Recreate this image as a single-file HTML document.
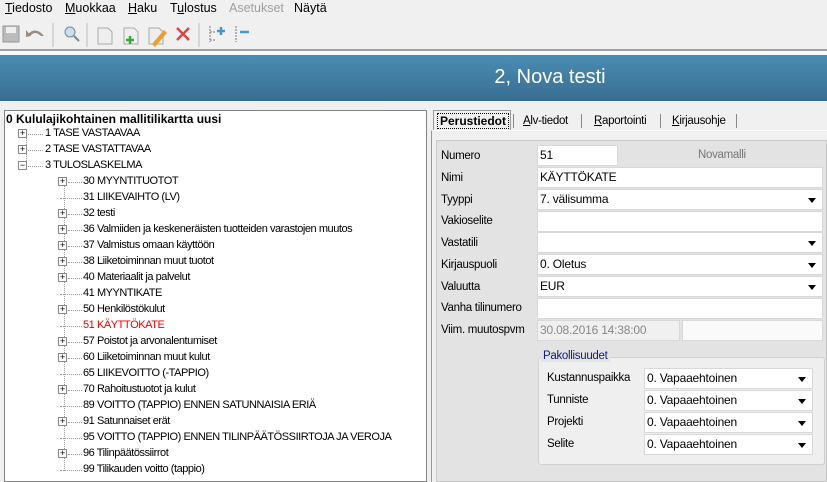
<!DOCTYPE html><html><head><style>
*{box-sizing:border-box;margin:0;padding:0}
body{width:827px;height:482px;overflow:hidden;background:#f0f0f0;font-family:"Liberation Sans",sans-serif;font-size:12px;color:#000;position:relative}
.a{position:absolute;white-space:nowrap}
.hdr{position:absolute;left:0;top:55px;width:827px;height:46px;background:linear-gradient(#4a8db3,#396d92);color:#fff;font-size:20px;text-align:center;line-height:44px;padding-left:273px}
.tree{position:absolute;left:4px;top:110px;width:423px;height:372px;background:#fff;border:1px solid #828282}
.t{position:absolute;white-space:nowrap;font-size:11px;letter-spacing:-0.45px}
.pb{position:absolute;width:9px;height:9px;border:1px solid #888;background:#fff;font-size:9px;line-height:7px;text-align:center}
.dv{position:absolute;border-top:1px dotted #999;height:0}
.vl{position:absolute;border-left:1px dotted #999;width:0}
.in{position:absolute;background:#fff;border:1px solid #d8d8d8;height:21px;font-size:12px;line-height:19px;padding-left:2px;letter-spacing:-0.2px}
.dd:after{content:"";position:absolute;right:6px;top:8px;border-left:4px solid transparent;border-right:4px solid transparent;border-top:5px solid #000}
.lb{position:absolute;font-size:11.5px;letter-spacing:-0.3px}
</style></head><body>
<div class="a" style="left:5px;top:1px;font-size:12.5px"><u>T</u>iedosto</div>
<div class="a" style="left:65px;top:1px;font-size:12.5px"><u>M</u>uokkaa</div>
<div class="a" style="left:128px;top:1px;font-size:12.5px"><u>H</u>aku</div>
<div class="a" style="left:170px;top:1px;font-size:12.5px">T<u>u</u>lostus</div>
<div class="a" style="left:229px;top:1px;font-size:12.5px;color:#a0a0a0">Asetukset</div>
<div class="a" style="left:294px;top:1px;font-size:12.5px">Näytä</div>
<svg class="a" style="left:0;top:20px" width="270" height="30">
<rect x="3" y="6" width="16" height="16" fill="#bbb" stroke="#999"/><rect x="6" y="7" width="10" height="6" fill="#eee"/>
<path d="M28 14 q8-8 16 2 l-3 0 q-6-6-11 0z" fill="#9a8a80"/><path d="M26 10 l5 6 l-5 1z" fill="#9a8a80"/>
<line x1="53" y1="3" x2="53" y2="27" stroke="#bbb"/>
<circle cx="70" cy="12" r="5" fill="#cde" stroke="#789"/><line x1="74" y1="16" x2="79" y2="21" stroke="#789" stroke-width="2"/>
<line x1="87" y1="3" x2="87" y2="27" stroke="#bbb"/>
<path d="M98 8h10l4 4v12h-14z" fill="#eee" stroke="#aaa"/>
<path d="M124 8h10l4 4v12h-14z" fill="#eee" stroke="#aaa"/><path d="M126 20h8M130 16v8" stroke="#3a3" stroke-width="2.5"/>
<path d="M149 8h10l4 4v12h-14z" fill="#eee" stroke="#aaa"/><path d="M152 24l12-14 3 3-12 14z" fill="#e8a030"/>
<path d="M177 8l12 12M189 8l-12 12" stroke="#d44" stroke-width="2.5"/>
<line x1="199" y1="3" x2="199" y2="27" stroke="#bbb"/>
<path d="M210 6v16M210 12h5M210 20h5" stroke="#777" stroke-dasharray="2 1"/><path d="M217 11h8M221 7v8" stroke="#49c" stroke-width="2.5"/>
<path d="M236 6v16" stroke="#777" stroke-dasharray="2 1"/><path d="M240 12h9" stroke="#49c" stroke-width="2.5"/>
</svg>
<div class="a" style="left:0;top:49px;width:827px;height:2px;background:#a0a0a0"></div>
<div class="a" style="left:0;top:51px;width:827px;height:4px;background:#f8f8f8"></div>
<div class="hdr">2, Nova testi</div>
<div class="tree">
<div class="t" style="left:1px;top:1px;font-weight:bold;font-size:12px;letter-spacing:0">0 Kululajikohtainen mallitilikartta uusi</div>
<div class="vl" style="left:21px;top:18px;height:40px"></div>
<div class="vl" style="left:59px;top:66px;height:294px"></div>
</div>
<div id="tr"></div>
<script>
var L1=[["1 TASE VASTAAVAA","+"],["2 TASE VASTATTAVAA","+"],["3 TULOSLASKELMA","−"]];
var L2=[["30 MYYNTITUOTOT",1],["31 LIIKEVAIHTO (LV)",0],["32 testi",1],["36 Valmiiden ja keskeneräisten tuotteiden varastojen muutos",1],["37 Valmistus omaan käyttöön",1],["38 Liiketoiminnan muut tuotot",1],["40 Materiaalit ja palvelut",1],["41 MYYNTIKATE",0],["50 Henkilöstökulut",1],["51 KÄYTTÖKATE",0,1],["57 Poistot ja arvonalentumiset",1],["60 Liiketoiminnan muut kulut",1],["65 LIIKEVOITTO (-TAPPIO)",0],["70 Rahoitustuotot ja kulut",1],["89 VOITTO (TAPPIO) ENNEN SATUNNAISIA ERIÄ",0],["91 Satunnaiset erät",1],["95 VOITTO (TAPPIO) ENNEN TILINPÄÄTÖSSIIRTOJA JA VEROJA",0],["96 Tilinpäätössiirrot",1],["99 Tilikauden voitto (tappio)",0]];
var h="";
L1.forEach(function(e,i){var y=134+i*16;h+='<div class="pb" style="left:18px;top:'+(y-5)+'px">'+e[1]+'</div><div class="dv" style="left:28px;top:'+y+'px;width:15px"></div><div class="t" style="left:45px;top:'+(y-7)+'px">'+e[0]+'</div>';});
L2.forEach(function(e,i){var y=182+i*16;if(e[1])h+='<div class="pb" style="left:58px;top:'+(y-5)+'px">+</div>';h+='<div class="dv" style="left:'+(e[1]?68:60)+'px;top:'+y+'px;width:'+(e[1]?14:22)+'px"></div><div class="t" style="left:83px;top:'+(y-7)+'px;'+(e[2]?'color:#e00':'')+'">'+e[0]+'</div>';});
document.getElementById("tr").innerHTML=h;
</script>
<div class="a" style="left:433px;top:110px;width:78px;height:20px;border:1px solid #999;border-bottom:none;background:#f0f0f0"></div>
<div class="a" style="left:437px;top:113px;border:1px dotted #000;padding:0 2px;font-weight:bold;font-size:12px">Perustiedot</div>
<div class="a" style="left:523px;top:115px;font-size:11.5px;letter-spacing:-0.3px"><u>A</u>lv-tiedot</div>
<div class="a" style="left:594px;top:115px;font-size:11.5px;letter-spacing:-0.3px"><u>R</u>aportointi</div>
<div class="a" style="left:672px;top:115px;font-size:11.5px;letter-spacing:-0.3px"><u>K</u>irjausohje</div>
<div class="a" style="left:513px;top:114px;width:1px;height:14px;background:#888"></div>
<div class="a" style="left:581px;top:114px;width:1px;height:14px;background:#888"></div>
<div class="a" style="left:660px;top:114px;width:1px;height:14px;background:#888"></div>
<div class="a" style="left:736px;top:114px;width:1px;height:14px;background:#888"></div>
<div class="a" style="left:431px;top:130px;width:396px;height:352px;border-left:1px solid #999;border-top:1px solid #fff;background:#f0f0f0"></div>
<div class="a" style="left:436px;top:140px;width:391px;height:342px;background:#e3e3e3;border:1px solid #c8c8c8"></div>
<div class="lb" style="left:441px;top:150px">Numero</div>
<div class="in" style="left:537px;top:145px;width:81px">51</div>
<div class="lb" style="left:698px;top:149px;color:#777">Novamalli</div>
<div class="lb" style="left:441px;top:172px">Nimi</div><div class="in" style="left:537px;top:167px;width:286px">KÄYTTÖKATE</div>
<div class="lb" style="left:441px;top:194px">Tyyppi</div><div class="in dd" style="left:537px;top:189px;width:286px">7. välisumma</div>
<div class="lb" style="left:441px;top:215px">Vakioselite</div><div class="in" style="left:537px;top:211px;width:286px"></div>
<div class="lb" style="left:441px;top:237px">Vastatili</div><div class="in dd" style="left:537px;top:232px;width:286px"></div>
<div class="lb" style="left:441px;top:259px">Kirjauspuoli</div><div class="in dd" style="left:537px;top:254px;width:286px">0. Oletus</div>
<div class="lb" style="left:441px;top:281px">Valuutta</div><div class="in dd" style="left:537px;top:276px;width:286px">EUR</div>
<div class="lb" style="left:441px;top:302px">Vanha tilinumero</div><div class="in" style="left:537px;top:298px;width:286px"></div>
<div class="lb" style="left:441px;top:324px">Viim. muutospvm</div>
<div class="in" style="left:537px;top:320px;width:143px;background:#f0f0f0;color:#888">30.08.2016 14:38:00</div>
<div class="in" style="left:682px;top:320px;width:141px;background:#fafafa"></div>
<div class="a" style="left:538px;top:357px;width:287px;height:108px;border:1px solid #d0d0d0;border-radius:3px;background:#efefef"></div>
<div class="a" style="left:541px;top:350px;background:#e3e3e3;color:#102080;padding:0 2px;font-size:11.5px;letter-spacing:-0.3px">Pakollisuudet</div>
<div class="lb" style="left:547px;top:372px">Kustannuspaikka</div><div class="in dd" style="left:644px;top:368px;width:169px">0. Vapaaehtoinen</div>
<div class="lb" style="left:547px;top:394px">Tunniste</div><div class="in dd" style="left:644px;top:390px;width:169px">0. Vapaaehtoinen</div>
<div class="lb" style="left:547px;top:416px">Projekti</div><div class="in dd" style="left:644px;top:412px;width:169px">0. Vapaaehtoinen</div>
<div class="lb" style="left:547px;top:438px">Selite</div><div class="in dd" style="left:644px;top:434px;width:169px">0. Vapaaehtoinen</div>
</body></html>
